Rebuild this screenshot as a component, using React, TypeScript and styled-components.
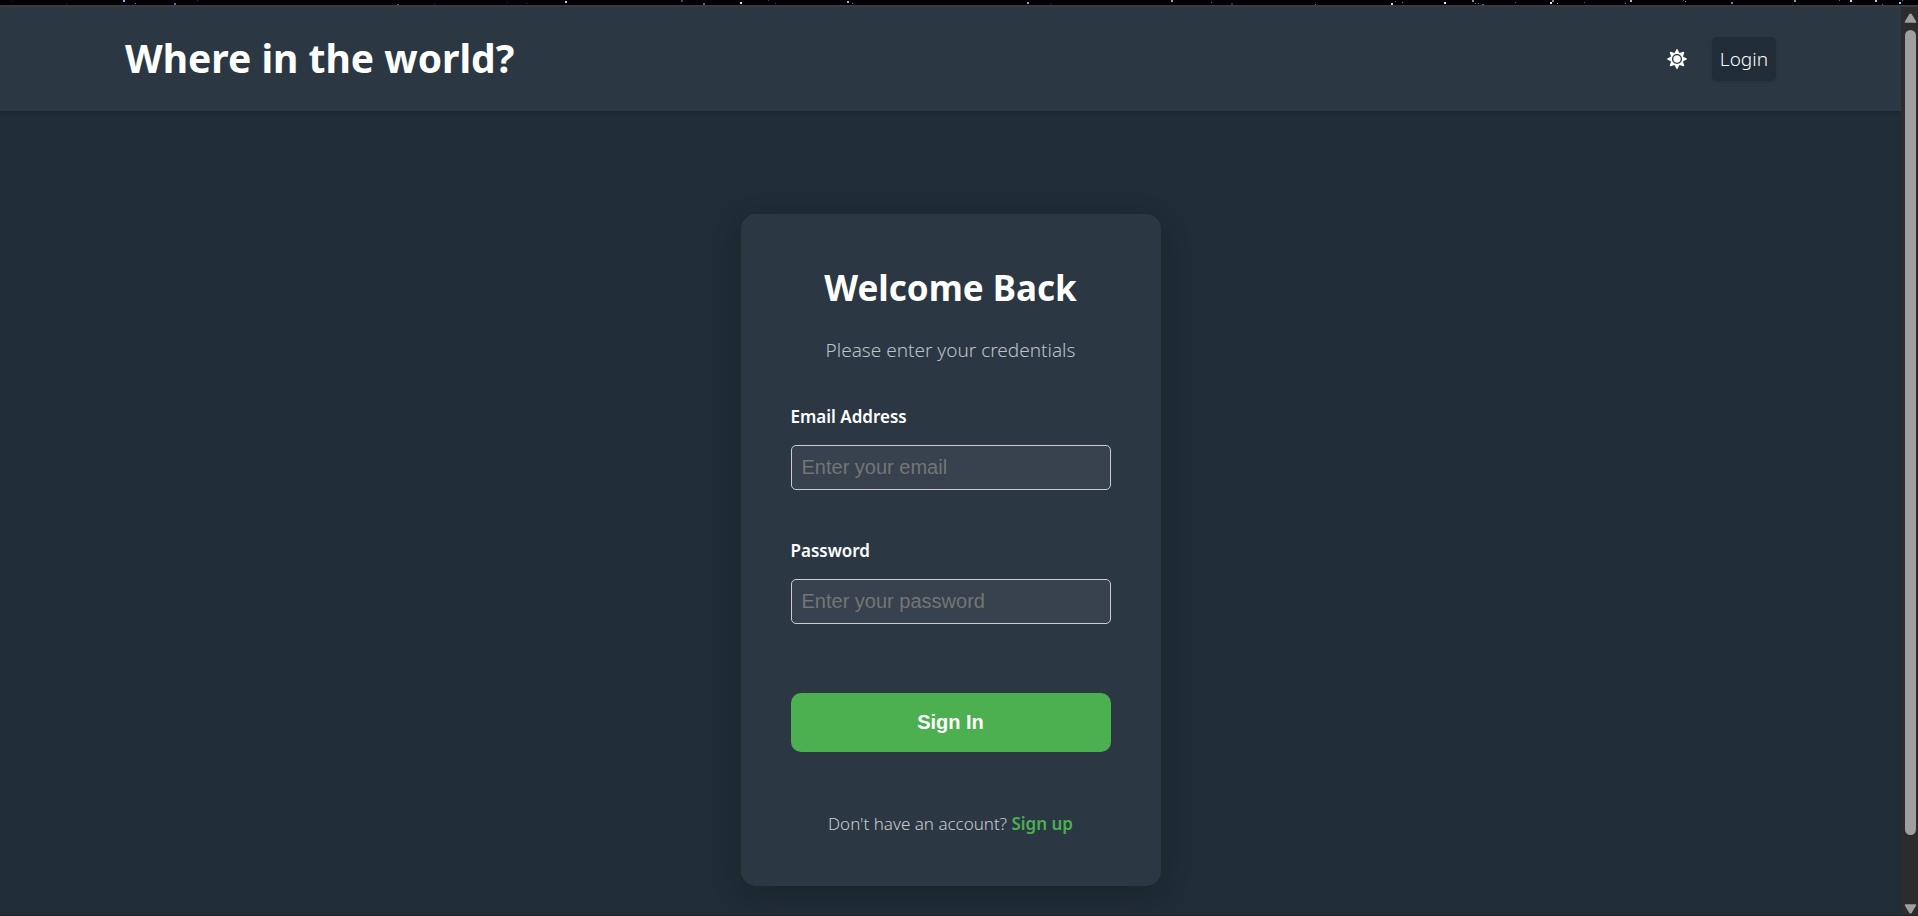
import React from 'react';
import styled, { createGlobalStyle } from 'styled-components';
import { FaSun } from 'react-icons/fa';

const GlobalStyle = createGlobalStyle`
  *, *::before, *::after { box-sizing: border-box; }
  body {
    margin: 0;
    background: #202c36;
    color: #fff;
    font-family: 'Noto Sans', 'Liberation Sans', sans-serif;
    font-weight: 300;
  }
  h1, h2, p { margin: 0; }
`;

const Frame = styled.div`
  display: flex;
  flex-direction: column;
  min-height: 100vh;
  border-bottom: 1px solid #1a222c;
`;

const NightSky = styled.div`
  height: 7px;
  background: #020207;
  border-bottom: 2px solid #3e3b3b;
  overflow: hidden;

  svg { display: block; }
`;

const Body = styled.div`
  flex: 1;
  display: flex;
`;

const Page = styled.div`
  flex: 1;
  min-width: 0;
`;

const Header = styled.header`
  display: flex;
  align-items: center;
  justify-content: space-between;
  height: 104px;
  padding: 0 125px;
  background: #2b3743;
  box-shadow: 0 2px 4px rgba(0, 0, 0, 0.12);
`;

const SiteTitle = styled.h1`
  font-size: 39px;
  font-weight: 700;
  line-height: 56px;
  padding-bottom: 2px;
`;

const Actions = styled.nav`
  display: flex;
  align-items: center;
  gap: 25px;
`;

const ThemeButton = styled.button`
  display: flex;
  padding: 0;
  border: 0;
  background: none;
  color: #fff;
  font-size: 20px;
  cursor: pointer;
`;

const LoginLink = styled.a`
  padding: 10px 8px;
  border-radius: 5px;
  background: #202c37;
  box-shadow: 0 2px 4px rgba(0, 0, 0, 0.1);
  color: #fff;
  font-size: 19px;
  line-height: 24px;
  text-decoration: none;
`;

const Main = styled.main`
  display: flex;
  justify-content: center;
  padding: 103px 20px 28px;
`;

const Card = styled.form`
  width: 100%;
  max-width: 420px;
  padding: 51px 50px 50px;
  border-radius: 15px;
  background: #2b3844;
  box-shadow: 0 8px 30px rgba(0, 0, 0, 0.2);
`;

const CardTitle = styled.h2`
  margin-bottom: 28px;
  font-size: 35px;
  font-weight: 700;
  line-height: 45px;
  text-align: center;
`;

const Subtitle = styled.p`
  margin-bottom: 42px;
  color: #bfc2c5;
  font-size: 19px;
  line-height: 25px;
  text-align: center;
`;

const Field = styled.div`
  display: flex;
  flex-direction: column;
  gap: 16px;
  margin-bottom: 49px;
`;

const Label = styled.label`
  font-size: 17px;
  font-weight: 600;
  line-height: 24px;
`;

const Input = styled.input`
  width: 100%;
  height: 45px;
  padding: 0 10px;
  border: 1px solid #ccc;
  border-radius: 5px;
  background: #37424e;
  color: #fff;
  font: 400 20px 'Liberation Sans', Arial, sans-serif;

  &::placeholder { color: #757575; opacity: 1; }
`;

const SubmitButton = styled.button`
  display: block;
  width: 100%;
  height: 59px;
  margin: 69px 0 60px;
  border: 0;
  border-radius: 10px;
  background: #4caf50;
  color: #fff;
  font: 700 20px 'Liberation Sans', Arial, sans-serif;
  cursor: pointer;
`;

const Footnote = styled.p`
  color: #ccc;
  font-size: 17px;
  line-height: 24px;
  text-align: center;
`;

const SignUpLink = styled.a`
  color: #4caf50;
  font-weight: 600;
  text-decoration: none;
`;

const ScrollTrack = styled.div`
  display: flex;
  flex-direction: column;
  align-items: center;
  width: 17px;
  padding: 6px 0 1px 2px;
  background: #2c2c2c;

  svg { display: block; }
`;

const ScrollThumb = styled.div`
  flex: 805;
  width: 11px;
  margin-top: 7px;
  border-radius: 6px;
  background: #9f9f9f;
`;

const ScrollRest = styled.div`
  flex: 69;
`;

const stars: [number, number, number, string][] = [
  [12, 1, 1, '#1c1c3a'], [66, 3, 1, '#1d3038'], [123, 0, 2, '#8bb4e8'], [135, 3, 1, '#77808f'],
  [174, 3, 2, '#5f62ac'], [197, 0, 1, '#28284a'], [397, 4, 2, '#49657a'], [434, 3, 1, '#282838'],
  [507, 2, 1, '#1d2c3c'], [526, 3, 1, '#243c54'], [565, 1, 2, '#b8d2e8'], [681, 0, 2, '#454466'],
  [703, 3, 2, '#536285'], [740, 2, 2, '#d3def0'], [768, 0, 1, '#26384b'], [775, 3, 1, '#3c4058'],
  [847, 1, 2, '#a0b4d5'], [852, 3, 1, '#67738c'], [1027, 2, 2, '#79a5d5'], [1050, 3, 1, '#252950'],
  [1171, 0, 2, '#aaa4b0'], [1211, 2, 1, '#6b6c95'], [1231, 3, 2, '#243147'], [1315, 4, 1, '#777980'],
  [1391, 3, 2, '#d6d6d6'], [1395, 1, 1, '#55637a'], [1402, 2, 1, '#8982a5'], [1444, 2, 2, '#e1e7ee'],
  [1472, 0, 2, '#7898ad'], [1475, 3, 1, '#6f7d9b'], [1478, 3, 1, '#67768e'], [1482, 4, 2, '#58778d'],
  [1515, 2, 1, '#64657b'], [1550, 2, 2, '#e9eef5'], [1552, 0, 2, '#8c8f9c'], [1557, 3, 1, '#a4a6b5'],
  [1584, 2, 1, '#5a5680'], [1625, 3, 1, '#7484bd'], [1630, 0, 2, '#b7b4be'], [1683, 0, 1, '#46649b'],
  [1685, 1, 1, '#91a7bc'], [1731, 2, 2, '#6b899d'], [1794, 0, 2, '#799daa'], [1839, 0, 1, '#65608a'],
  [1850, 0, 2, '#d0dbe5'], [1875, 0, 2, '#c9c4d4'], [1882, 4, 1, '#706b98'], [1899, 2, 2, '#a8c1f5'],
  [1902, 0, 1, '#5b7b94'],
];

const Stars = () => (
  <svg width="100%" height="5" viewBox="0 0 1918 5" preserveAspectRatio="xMinYMin slice" aria-hidden="true">
    {stars.map(([x, y, size, fill]) => (
      <rect key={x} x={x} y={y} width={size} height={size} fill={fill} />
    ))}
  </svg>
);

const Arrow = ({ down = false }: { down?: boolean }) => (
  <svg width="13" height="10" viewBox="0 0 13 10" aria-hidden="true">
    <path
      d={down ? 'M1.5 1h10L7 8.5Q6.5 9.2 6 8.5Z' : 'M1.5 9h10L7 1.5Q6.5.8 6 1.5Z'}
      fill="#9f9f9f"
      stroke="#9f9f9f"
      strokeWidth="1.5"
      strokeLinejoin="round"
    />
  </svg>
);

export default function App() {
  return (
    <>
      <GlobalStyle />
      <Frame>
        <NightSky><Stars /></NightSky>
        <Body>
          <Page>
            <Header>
              <SiteTitle>Where in the world?</SiteTitle>
              <Actions>
                <ThemeButton type="button" aria-label="Toggle theme"><FaSun /></ThemeButton>
                <LoginLink href="#login">Login</LoginLink>
              </Actions>
            </Header>
            <Main>
              <Card onSubmit={(e) => e.preventDefault()}>
                <CardTitle>Welcome Back</CardTitle>
                <Subtitle>Please enter your credentials</Subtitle>
                <Field>
                  <Label htmlFor="email">Email Address</Label>
                  <Input id="email" type="email" placeholder="Enter your email" />
                </Field>
                <Field>
                  <Label htmlFor="password">Password</Label>
                  <Input id="password" type="password" placeholder="Enter your password" />
                </Field>
                <SubmitButton type="submit">Sign In</SubmitButton>
                <Footnote>
                  Don't have an account? <SignUpLink href="#signup">Sign up</SignUpLink>
                </Footnote>
              </Card>
            </Main>
          </Page>
          <ScrollTrack aria-hidden="true">
            <Arrow />
            <ScrollThumb />
            <ScrollRest />
            <Arrow down />
          </ScrollTrack>
        </Body>
      </Frame>
    </>
  );
}
